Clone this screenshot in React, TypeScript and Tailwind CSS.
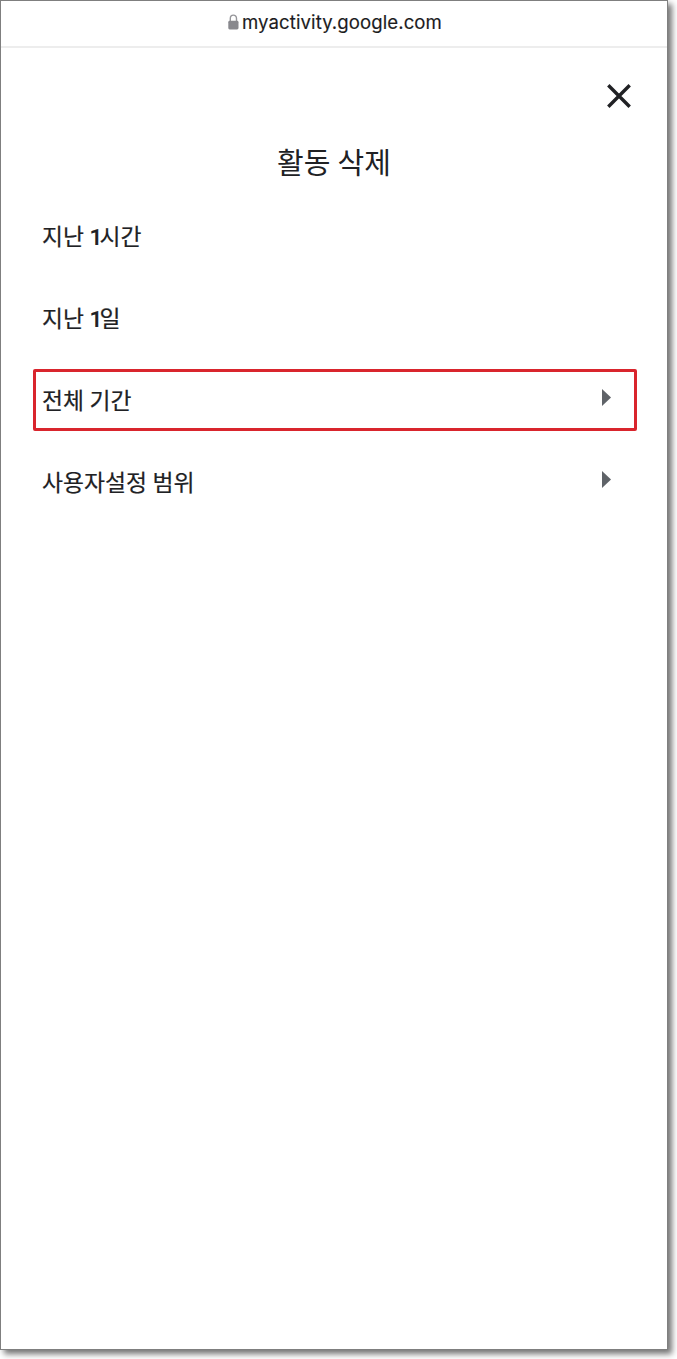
interface RangeOption {
  label: string;
  hasSubmenu?: boolean;
  highlighted?: boolean;
}

const options: RangeOption[] = [
  { label: "지난 1시간" },
  { label: "지난 1일" },
  { label: "전체 기간", hasSubmenu: true, highlighted: true },
  { label: "사용자설정 범위", hasSubmenu: true },
];

function LockIcon() {
  return (
    <svg width="11" height="16" viewBox="0 0 11 16" fill="none">
      <path d="M2.3 8V4.4a3.1 3.3 0 0 1 6.2 0V8" stroke="#96969a" strokeWidth="1.4" />
      <rect x="0.3" y="6.8" width="10.2" height="8.6" rx="1.4" fill="#88888d" />
    </svg>
  );
}

function CloseIcon() {
  return (
    <svg width="24" height="24" viewBox="0 0 24 24" fill="none">
      <path d="M1.3 1.3L22.7 22.7M22.7 1.3L1.3 22.7" stroke="#202124" strokeWidth="3.4" />
    </svg>
  );
}

function OptionRow({ label, hasSubmenu, highlighted }: RangeOption) {
  return (
    <li
      className={`flex h-[62px] items-center justify-between rounded-[2px] border-[3px] pr-[23px] pl-[6px] ${
        highlighted ? "border-[#d9252d]" : "border-transparent"
      }`}
    >
      <span className="mt-[3px] text-[22.8px] leading-[32px] whitespace-nowrap text-[#202124] [-webkit-text-stroke:0.2px_#202124]">
        {/* Digits sit tighter and heavier than the Hangul around them */}
        {label.split(/(\d+)/).map((part, i) =>
          /\d/.test(part) ? (
            <span key={i} className="font-medium tracking-[-3px]">
              {part}
            </span>
          ) : (
            part
          )
        )}
      </span>
      {hasSubmenu && (
        <svg className="mb-[5px]" width="9" height="17" viewBox="0 0 9 17">
          <path d="M0 0L9 8.5L0 17Z" fill="#5f6368" />
        </svg>
      )}
    </li>
  );
}

export default function App() {
  return (
    <div className="h-[1359px] w-[677px] overflow-hidden bg-white font-['Roboto','Noto_Sans_CJK_KR',sans-serif]">
      <div className="flex h-[1350px] w-[668px] flex-col border border-[#7f7f7f] bg-white shadow-[4px_4px_6px_rgba(0,0,0,0.55)]">
        {/* Browser address bar */}
        <header className="flex h-[47px] shrink-0 items-center justify-center gap-[3px] border-b-2 border-[#ededed] pb-[3px] pl-[2px]">
          <LockIcon />
          <span className="font-['Inter',sans-serif] text-[18.6px] leading-6 tracking-[0.08px] text-[#1c1c1e] [-webkit-text-stroke:0.15px_#1c1c1e]">
            myactivity.google.com
          </span>
        </header>

        <div className="flex justify-end pt-9 pr-9">
          <button type="button" aria-label="닫기">
            <CloseIcon />
          </button>
        </div>

        <h1 className="mt-[35px] text-center text-[29px] leading-[42px] font-normal text-[#202124]">
          활동 삭제
        </h1>

        <ul className="mt-[20px] flex flex-col gap-5 pr-[30px] pl-8">
          {options.map((option) => (
            <OptionRow key={option.label} {...option} />
          ))}
        </ul>
      </div>
    </div>
  );
}
